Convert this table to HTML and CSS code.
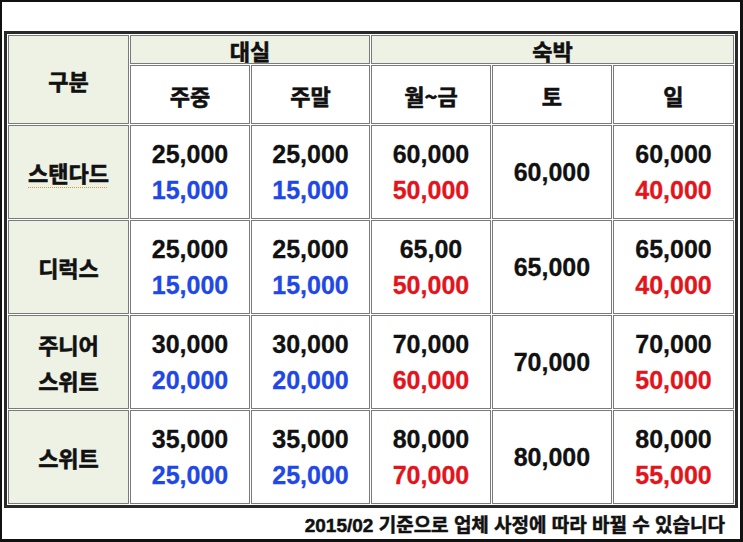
FILE: index.html
```html
<!DOCTYPE html>
<html lang="ko">
<head>
<meta charset="utf-8">
<title>요금표</title>
<link rel="stylesheet" href="styles.css">
</head>
<body>
<div class="frame">
  <table class="rates">
    <colgroup>
      <col class="c1"><col class="c2"><col class="c3"><col class="c4"><col class="c5"><col class="c6">
    </colgroup>
    <tr class="h1">
      <th class="label" rowspan="2">구분</th>
      <th class="group" colspan="2">대실</th>
      <th class="group" colspan="3">숙박</th>
    </tr>
    <tr class="h2">
      <th>주중</th><th>주말</th><th>월~금</th><th>토</th><th>일</th>
    </tr>
    <tr class="row">
      <th class="label"><span class="spell">스탠다드</span></th>
      <td><span class="n">25,000</span><span class="n blue">15,000</span></td>
      <td><span class="n">25,000</span><span class="n blue">15,000</span></td>
      <td><span class="n">60,000</span><span class="n red">50,000</span></td>
      <td><span class="n">60,000</span></td>
      <td><span class="n">60,000</span><span class="n red">40,000</span></td>
    </tr>
    <tr class="row">
      <th class="label">디럭스</th>
      <td><span class="n">25,000</span><span class="n blue">15,000</span></td>
      <td><span class="n">25,000</span><span class="n blue">15,000</span></td>
      <td><span class="n">65,00</span><span class="n red">50,000</span></td>
      <td><span class="n">65,000</span></td>
      <td><span class="n">65,000</span><span class="n red">40,000</span></td>
    </tr>
    <tr class="row">
      <th class="label"><span class="ln">주니어</span><span class="ln">스위트</span></th>
      <td><span class="n">30,000</span><span class="n blue">20,000</span></td>
      <td><span class="n">30,000</span><span class="n blue">20,000</span></td>
      <td><span class="n">70,000</span><span class="n red">60,000</span></td>
      <td><span class="n">70,000</span></td>
      <td><span class="n">70,000</span><span class="n red">50,000</span></td>
    </tr>
    <tr class="row">
      <th class="label">스위트</th>
      <td><span class="n">35,000</span><span class="n blue">25,000</span></td>
      <td><span class="n">35,000</span><span class="n blue">25,000</span></td>
      <td><span class="n">80,000</span><span class="n red">70,000</span></td>
      <td><span class="n">80,000</span></td>
      <td><span class="n">80,000</span><span class="n red">55,000</span></td>
    </tr>
  </table>
  <div class="note">2015/02 기준으로 업체 사정에 따라 바뀔 수 있습니다</div>
</div>
</body>
</html>
```

FILE: styles.css
```css
html, body {
  margin: 0;
  padding: 0;
  background: #ffffff;
}

body {
  font-family: "Liberation Sans", "Noto Sans CJK KR", sans-serif;
  color: #111111;
}

.frame {
  width: 743px;
  height: 542px;
  box-sizing: border-box;
  border: 2px solid #111111;
  border-right-width: 3px;
  border-bottom-width: 3px;
  padding: 29px 2px 0 2px;
  display: flex;
  flex-direction: column;
}

.rates {
  width: 734px;
  table-layout: fixed;
  border-collapse: separate;
  border-spacing: 1px;
  border: 3px solid #2a2a2a;
  background: #ffffff;
}

.c1 { width: 119px; }
.c2 { width: 118px; }
.c3 { width: 117px; }
.c4 { width: 118px; }
.c5 { width: 118px; }
.c6 { width: 119px; }

.rates th,
.rates td {
  border: 1px solid #7a7a7a;
  padding: 0;
  text-align: center;
  vertical-align: middle;
}

.rates th {
  font-family: "Noto Sans CJK KR", "Liberation Sans", sans-serif;
  font-weight: 700;
  font-size: 22px;
  line-height: 36px;
  color: #111111;
  background: #ffffff;
  -webkit-text-stroke: 0.6px currentColor;
}

.rates th.label,
.rates th.group {
  background: #edf2e4;
}

.h1 { height: 29px; }
.h1 .group { line-height: 26px; }
.h2 { height: 59px; }
.row { height: 94px; }

.spell {
  text-decoration: underline dotted #d19a2a;
  text-underline-offset: 5px;
  text-decoration-thickness: 1px;
}

.ln {
  display: block;
}

.n {
  display: block;
  font-family: "Liberation Sans", Arial, sans-serif;
  font-weight: 700;
  font-size: 25px;
  line-height: 36px;
  color: #111111;
  -webkit-text-stroke: 0.3px currentColor;
}

.n.blue { color: #1f48e6; }
.n.red { color: #e3141b; }

.note {
  flex: 1;
  display: flex;
  align-items: center;
  justify-content: flex-end;
  padding-right: 13px;
  font-family: "Liberation Sans", "Noto Sans CJK KR", sans-serif;
  font-weight: 700;
  font-size: 19px;
  color: #111111;
  -webkit-text-stroke: 0.5px currentColor;
}
```
